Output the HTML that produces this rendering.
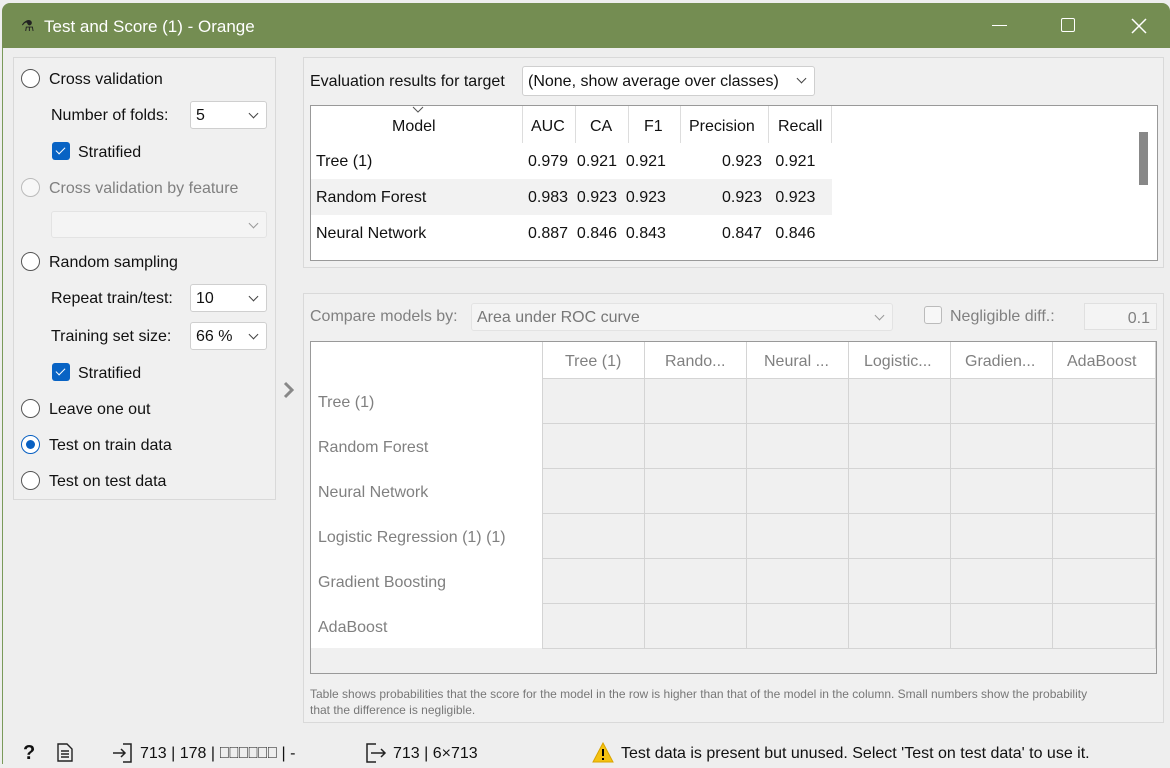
<!DOCTYPE html><html><head><style>
*{box-sizing:border-box;margin:0;padding:0}
body{width:1170px;height:768px;background:#eeeeee;font-family:"Liberation Sans",sans-serif;font-size:16px;color:#111;position:relative;overflow:hidden}
.a{position:absolute;white-space:nowrap}
.tb{left:2px;top:3px;width:1168px;height:45px;background:#748d52;border-radius:8px 8px 0 0}
.box{position:absolute;border:1px solid #d9d9d9;background:#f0f0f0}
.rad{position:absolute;width:19px;height:19px;border:1px solid #555;border-radius:50%;background:#fff}
.rad.g{border-color:#bbb;background:#f7f7f7}
.rad.on{border:1px solid #0860c2}
.rad.on:after{content:"";position:absolute;left:4px;top:4px;width:9px;height:9px;border-radius:50%;background:#0860c2}
.chk{position:absolute;width:18px;height:18px;background:#0863c4;border-radius:3px}
.chk:after{content:"";position:absolute;left:6px;top:3px;width:4px;height:8px;border:solid #fff;border-width:0 1.5px 1.5px 0;transform:rotate(45deg)}
.cb{position:absolute;background:#fff;border:1px solid #cfcfcf;border-radius:3px;padding-left:5px;line-height:27px}
.cb:after{content:"";position:absolute;right:9px;top:8px;width:6px;height:6px;border:solid #444;border-width:0 1px 1px 0;transform:rotate(45deg)}
.cb.d{background:#f4f4f4;color:#777;border-color:#e3e3e3}
.cb.d:after{border-color:#999}
.g{color:#808080}
</style></head><body>
<div class="a tb"></div>
<div class="a" style="left:21px;top:17px;color:#222;font-size:15px">⚗</div>
<div class="a" style="left:44px;top:17px;color:#fff;font-size:17px">Test and Score (1) - Orange</div>
<div class="a" style="left:992px;top:25px;width:15px;height:1px;background:#fff"></div>
<div class="a" style="left:1061px;top:18px;width:14px;height:14px;border:1.5px solid #fff;border-radius:2px"></div>
<svg class="a" style="left:1131px;top:18px" width="16" height="16"><path d="M1 1L15 15M15 1L1 15" stroke="#fff" stroke-width="1.5"/></svg>
<div class="a" style="left:2px;top:48px;width:1px;height:716px;background:#7a9a5a"></div>

<div class="box" style="left:13px;top:57px;width:263px;height:443px"></div>
<div class="rad" style="left:21px;top:69px"></div><div class="a" style="left:49px;top:71px">Cross validation</div>
<div class="a" style="left:51px;top:107px">Number of folds:</div><div class="cb" style="left:190px;top:101px;width:77px;height:28px">5</div>
<div class="chk" style="left:52px;top:142px"></div><div class="a" style="left:78px;top:144px">Stratified</div>
<div class="rad g" style="left:21px;top:178px"></div><div class="a g" style="left:49px;top:180px">Cross validation by feature</div>
<div class="cb d" style="left:51px;top:211px;width:216px;height:27px"></div>
<div class="rad" style="left:21px;top:252px"></div><div class="a" style="left:49px;top:254px">Random sampling</div>
<div class="a" style="left:51px;top:290px">Repeat train/test:</div><div class="cb" style="left:190px;top:284px;width:77px;height:28px">10</div>
<div class="a" style="left:51px;top:328px">Training set size:</div><div class="cb" style="left:190px;top:322px;width:77px;height:28px">66 %</div>
<div class="chk" style="left:52px;top:363px"></div><div class="a" style="left:78px;top:365px">Stratified</div>
<div class="rad" style="left:21px;top:399px"></div><div class="a" style="left:49px;top:401px">Leave one out</div>
<div class="rad on" style="left:21px;top:435px"></div><div class="a" style="left:49px;top:437px">Test on train data</div>
<div class="rad" style="left:21px;top:471px"></div><div class="a" style="left:49px;top:473px">Test on test data</div>
<svg class="a" style="left:282px;top:381px" width="14" height="18"><path d="M3 2L10 9L3 16" stroke="#888" stroke-width="3" fill="none"/></svg>

<div class="box" style="left:303px;top:57px;width:861px;height:211px"></div>
<div class="a" style="left:310px;top:73px">Evaluation results for target</div>
<div class="cb" style="left:522px;top:66px;width:293px;height:30px;line-height:29px">(None, show average over classes)</div>
<div class="a" style="left:310px;top:105px;width:848px;height:156px;background:#fff;border:1px solid #999"></div>
<div class="a" style="left:1139px;top:132px;width:9px;height:53px;background:#888"></div>
<svg class="a" style="left:412px;top:106px" width="12" height="7"><path d="M1 1L6 6L11 1" stroke="#555" fill="none"/></svg>
<div class="a" style="left:311px;top:179px;width:521px;height:36px;background:#f2f2f2"></div>
<div class="a" style="left:522px;top:106px;width:1px;height:37px;background:#ddd"></div>
<div class="a" style="left:575px;top:106px;width:1px;height:37px;background:#ddd"></div>
<div class="a" style="left:628px;top:106px;width:1px;height:37px;background:#ddd"></div>
<div class="a" style="left:680px;top:106px;width:1px;height:37px;background:#ddd"></div>
<div class="a" style="left:768px;top:106px;width:1px;height:37px;background:#ddd"></div>
<div class="a" style="left:831px;top:106px;width:1px;height:37px;background:#ddd"></div>
<div class="a" style="left:392px;top:118px">Model</div>
<div class="a" style="left:531px;top:118px">AUC</div><div class="a" style="left:590px;top:118px">CA</div><div class="a" style="left:644px;top:118px">F1</div><div class="a" style="left:689px;top:118px">Precision</div><div class="a" style="left:778px;top:118px">Recall</div>
<div class="a" style="left:316px;top:153px">Tree (1)</div><div class="a" style="left:316px;top:189px">Random Forest</div><div class="a" style="left:316px;top:225px">Neural Network</div>
<div class="a" style="left:528px;top:153px">0.979&nbsp; 0.921&nbsp; 0.921</div><div class="a" style="left:722px;top:153px">0.923&nbsp;&nbsp; 0.921</div>
<div class="a" style="left:528px;top:189px">0.983&nbsp; 0.923&nbsp; 0.923</div><div class="a" style="left:722px;top:189px">0.923&nbsp;&nbsp; 0.923</div>
<div class="a" style="left:528px;top:225px">0.887&nbsp; 0.846&nbsp; 0.843</div><div class="a" style="left:722px;top:225px">0.847&nbsp;&nbsp; 0.846</div>

<div class="box" style="left:303px;top:293px;width:861px;height:430px"></div>
<div class="a g" style="left:310px;top:308px">Compare models by:</div>
<div class="cb d" style="left:471px;top:303px;width:422px;height:28px">Area under ROC curve</div>
<div class="a" style="left:924px;top:306px;width:18px;height:18px;border:1px solid #bbb;border-radius:3px;background:#f7f7f7"></div>
<div class="a g" style="left:950px;top:308px">Negligible diff.:</div>
<div class="a g" style="left:1084px;top:303px;width:73px;height:27px;border:1px solid #e0e0e0;background:#f4f4f4;text-align:right;padding-right:6px;line-height:29px">0.1</div>
<div class="a" style="left:310px;top:341px;width:847px;height:333px;border:1px solid #999;background:#f0f0f0"></div>
<div class="a" style="left:311px;top:342px;width:231px;height:306px;background:#fff"></div>
<div class="a" style="left:542px;top:342px;width:614px;height:36px;background:#fff"></div>
<svg class="a" style="left:542px;top:342px" width="614" height="307"><g stroke="#d4d4d4" stroke-width="1"><path d="M0.5 0V307M102.5 0V307M204.5 0V307M306.5 0V307M408.5 0V307M510.5 0V307M613.5 0V307M0 36.5H614M0 81.5H614M0 126.5H614M0 171.5H614M0 216.5H614M0 261.5H614M0 306.5H614"/></g></svg>
<div class="a g" style="left:565px;top:353px">Tree (1)</div><div class="a g" style="left:665px;top:353px">Rando...</div><div class="a g" style="left:764px;top:353px">Neural ...</div><div class="a g" style="left:864px;top:353px">Logistic...</div><div class="a g" style="left:965px;top:353px">Gradien...</div><div class="a g" style="left:1067px;top:353px">AdaBoost</div>
<div class="a g" style="left:318px;top:394px">Tree (1)</div><div class="a g" style="left:318px;top:439px">Random Forest</div><div class="a g" style="left:318px;top:484px">Neural Network</div><div class="a g" style="left:318px;top:529px">Logistic Regression (1) (1)</div><div class="a g" style="left:318px;top:574px">Gradient Boosting</div><div class="a g" style="left:318px;top:619px">AdaBoost</div>
<div class="a" style="left:310px;top:686px;font-size:12px;color:#777;line-height:16px;white-space:normal;width:800px">Table shows probabilities that the score for the model in the row is higher than that of the model in the column. Small numbers show the probability that the difference is negligible.</div>

<div class="a" style="left:23px;top:742px;font-size:20px;font-weight:bold">?</div>
<svg class="a" style="left:57px;top:743px" width="16" height="19"><path d="M1 1H10L15 6V18H1Z M4 8H12M4 11H12M4 14H12" stroke="#222" stroke-width="1.4" fill="none"/></svg>
<svg class="a" style="left:112px;top:743px" width="22" height="20"><path d="M11 1H19V19H11M1 10H13M9 6L13 10L9 14" stroke="#222" stroke-width="1.5" fill="none"/></svg>
<div class="a" style="left:140px;top:745px">713 | 178 | ⎕⎕⎕⎕⎕⎕ | -</div>
<svg class="a" style="left:365px;top:743px" width="22" height="20"><path d="M11 1H2V19H11M6 10H20M16 6L20 10L16 14" stroke="#222" stroke-width="1.5" fill="none"/></svg>
<div class="a" style="left:393px;top:745px">713 | 6×713</div>
<svg class="a" style="left:592px;top:742px" width="22" height="21"><path d="M11 1L21 20H1Z" fill="#f5c211" stroke="#d9a400"/><path d="M11 7V14M11 16V18" stroke="#000" stroke-width="2"/></svg>
<div class="a" style="left:621px;top:745px">Test data is present but unused. Select 'Test on test data' to use it.</div>
</body></html>
